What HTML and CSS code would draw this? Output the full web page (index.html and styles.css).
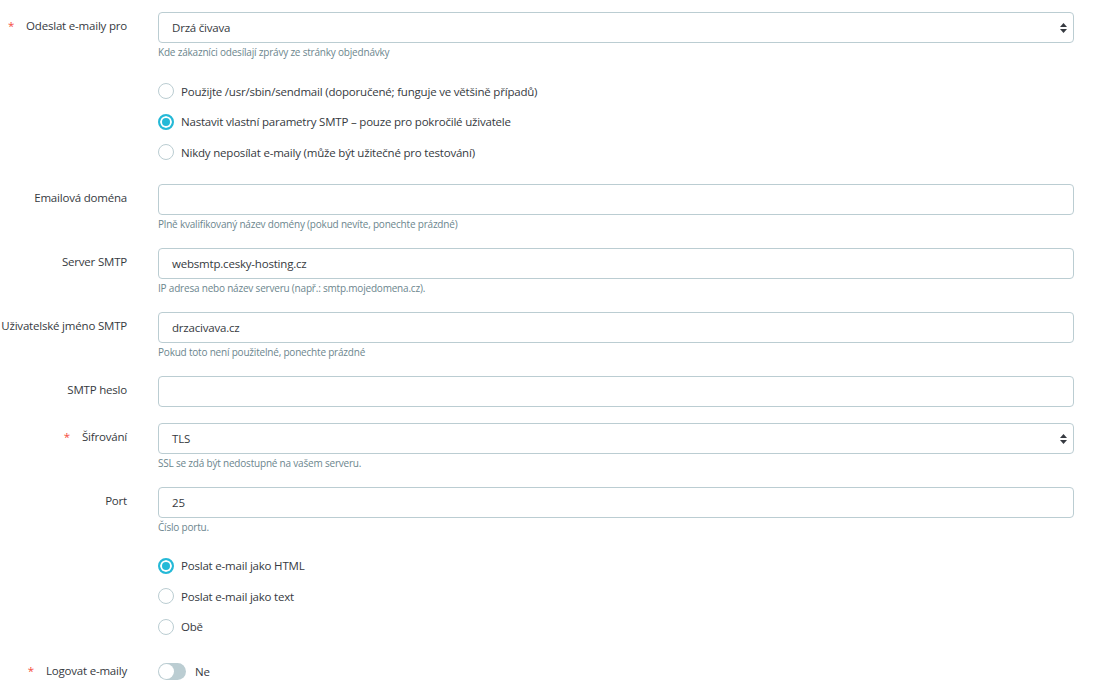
FILE: index.html
```html
<!DOCTYPE html>
<html lang="cs">
<head>
    <meta charset="UTF-8">
    <title>E-mail nastavení</title>
    <link rel="stylesheet" href="styles.css">
</head>
<body>
    <form class="email-form">
        <div class="form-row">
            <label class="form-label required">Odeslat e-maily pro</label>
            <div class="form-field">
                <div class="select-box">
                    <span>Drzá čivava</span>
                    <svg class="select-arrows" width="7" height="10" viewBox="0 0 7 10"><path d="M3.5 0 L7 4 H0 Z M0 6 H7 L3.5 10 Z" fill="#363a41"/></svg>
                </div>
                <div class="help">Kde zákazníci odesílají zprávy ze stránky objednávky</div>
            </div>
        </div>

        <div class="form-row">
            <div class="form-label"></div>
            <div class="form-field">
                <div class="radio"><span class="radio-dot"></span>Použijte /usr/sbin/sendmail (doporučené; funguje ve většině případů)</div>
                <div class="radio"><span class="radio-dot checked"></span>Nastavit vlastní parametry SMTP – pouze pro pokročilé uživatele</div>
                <div class="radio"><span class="radio-dot"></span>Nikdy neposílat e-maily (může být užitečné pro testování)</div>
            </div>
        </div>

        <div class="form-row">
            <label class="form-label">Emailová doména</label>
            <div class="form-field">
                <div class="input-box"></div>
                <div class="help">Plně kvalifikovaný název domény (pokud nevíte, ponechte prázdné)</div>
            </div>
        </div>

        <div class="form-row">
            <label class="form-label">Server SMTP</label>
            <div class="form-field">
                <div class="input-box">websmtp.cesky-hosting.cz</div>
                <div class="help">IP adresa nebo název serveru (např.: smtp.mojedomena.cz).</div>
            </div>
        </div>

        <div class="form-row">
            <label class="form-label">Uživatelské jméno SMTP</label>
            <div class="form-field">
                <div class="input-box">drzacivava.cz</div>
                <div class="help">Pokud toto není použitelné, ponechte prázdné</div>
            </div>
        </div>

        <div class="form-row">
            <label class="form-label">SMTP heslo</label>
            <div class="form-field">
                <div class="input-box"></div>
            </div>
        </div>

        <div class="form-row">
            <label class="form-label required">Šifrování</label>
            <div class="form-field">
                <div class="select-box">
                    <span>TLS</span>
                    <svg class="select-arrows" width="7" height="10" viewBox="0 0 7 10"><path d="M3.5 0 L7 4 H0 Z M0 6 H7 L3.5 10 Z" fill="#363a41"/></svg>
                </div>
                <div class="help">SSL se zdá být nedostupné na vašem serveru.</div>
            </div>
        </div>

        <div class="form-row">
            <label class="form-label">Port</label>
            <div class="form-field">
                <div class="input-box">25</div>
                <div class="help">Číslo portu.</div>
            </div>
        </div>

        <div class="form-row">
            <div class="form-label"></div>
            <div class="form-field">
                <div class="radio"><span class="radio-dot checked"></span>Poslat e-mail jako HTML</div>
                <div class="radio"><span class="radio-dot"></span>Poslat e-mail jako text</div>
                <div class="radio"><span class="radio-dot"></span>Obě</div>
            </div>
        </div>

        <div class="form-row">
            <label class="form-label required switch-label">Logovat e-maily</label>
            <div class="form-field">
                <div class="switch-row">
                    <span class="switch"><span class="switch-knob"></span></span>
                    Ne
                </div>
            </div>
        </div>
    </form>
</body>
</html>
```

FILE: styles.css
```css
body {
    margin: 0;
    padding: 0;
    font-family: "Open Sans", "Liberation Sans", sans-serif;
    font-size: 11.5px;
    letter-spacing: -0.2px;
    color: #363a41;
    background-color: #fff;
}

.email-form {
    padding: 12px 25px 0 0;
}

.form-row {
    display: grid;
    grid-template-columns: 127px 1fr;
    column-gap: 31px;
    margin-bottom: 16px;
}

.form-label {
    text-align: right;
    padding-top: 5px;
    line-height: 18px;
    white-space: nowrap;
}

.form-label.required::before {
    content: "*";
    color: #f54c3e;
    margin-right: 12px;
}

.switch-label {
    padding-top: 4px;
}

.input-box,
.select-box {
    box-sizing: border-box;
    height: 31px;
    border: 1px solid #bbcdd2;
    border-radius: 4px;
    padding: 0 13px;
    display: flex;
    align-items: center;
    background-color: #fff;
}

.select-box {
    justify-content: space-between;
    padding-right: 6px;
}

.select-arrows {
    margin-top: 1px;
}

.help {
    margin-top: 2px;
    line-height: 15px;
    font-size: 10px;
    letter-spacing: -0.2px;
    color: #6c868e;
}

.radio {
    height: 30.5px;
    display: flex;
    align-items: center;
}

.radio-dot {
    box-sizing: border-box;
    width: 16px;
    height: 16px;
    border: 1px solid #bbcdd2;
    border-radius: 50%;
    margin-right: 7px;
    flex-shrink: 0;
}

.radio-dot.checked {
    border: 2px solid #25b9d7;
    background-color: #25b9d7;
    box-shadow: inset 0 0 0 2px #fff;
}

.switch-row {
    height: 26px;
    display: flex;
    align-items: center;
}

.switch {
    position: relative;
    width: 28px;
    height: 17px;
    border-radius: 9px;
    background-color: #bbcdd2;
    margin-right: 9px;
}

.switch-knob {
    position: absolute;
    left: 1px;
    top: 1px;
    width: 15px;
    height: 15px;
    border-radius: 50%;
    background-color: #fff;
}
```
